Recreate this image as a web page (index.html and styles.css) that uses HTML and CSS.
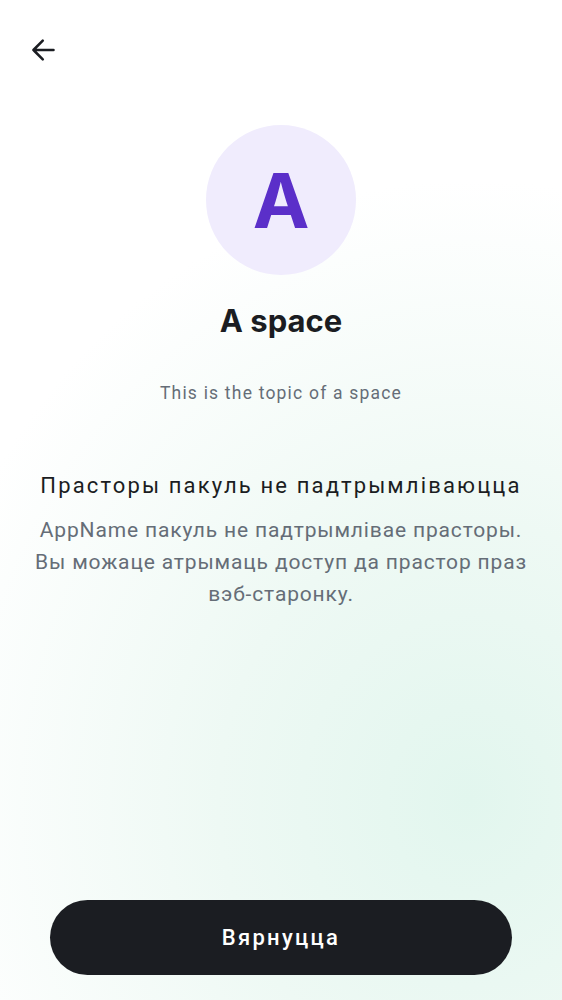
FILE: index.html
```html
<!DOCTYPE html>
<html lang="be">
<head>
<meta charset="utf-8">
<link rel="stylesheet" href="styles.css">
</head>
<body>
<div class="screen">
  <header class="topbar">
    <button class="back" aria-label="Back">
      <svg width="28" height="28" viewBox="0 0 24 24" fill="none" stroke="#1b1d22" stroke-width="2.2" stroke-linecap="round" stroke-linejoin="round"><path d="M21 12H3.8M11.8 4L3.8 12l8 8"/></svg>
    </button>
  </header>
  <main class="content">
    <div class="avatar">A</div>
    <h1 class="title">A space</h1>
    <p class="topic">This is the topic of a space</p>
    <h2 class="heading">Прасторы пакуль не падтрымліваюцца</h2>
    <p class="body">AppName пакуль не падтрымлівае прасторы. Вы можаце атрымаць доступ да прастор праз <span class="nowrap">вэб-старонку.</span></p>
  </main>
  <footer class="footer">
    <button class="primary">Вярнуцца</button>
  </footer>
</div>
</body>
</html>
```
FILE: styles.css
```css
html, body { margin: 0; padding: 0; }
body {
  width: 562px;
  height: 1000px;
  font-family: Roboto, "Noto Sans", sans-serif;
  color: #1b1d22;
  background: radial-gradient(ellipse 560px 620px at 470px 800px, #e2f6ee 0%, #eef9f4 45%, #ffffff 100%);
  overflow: hidden;
}
.screen {
  height: 1000px;
  display: flex;
  flex-direction: column;
}
.topbar {
  height: 100px;
  padding: 0 0 0 29px;
  display: flex;
  align-items: flex-start;
}
.back {
  margin-top: 36px;
  width: 28px; height: 28px;
  padding: 0; border: 0; background: none;
  display: flex;
}
.content {
  flex: 1;
  display: flex;
  flex-direction: column;
  align-items: center;
  text-align: center;
  padding: 0 16px;
}
.avatar {
  margin-top: 25px;
  width: 150px; height: 150px;
  border-radius: 50%;
  background: #f0ecfd;
  color: #5b2fc9;
  font-family: Inter, sans-serif;
  font-weight: 700;
  font-size: 76px;
  line-height: 150px;
}
.title {
  margin: 26px 0 0;
  font-family: Inter, sans-serif;
  font-weight: 700;
  font-size: 31px;
  line-height: 40px;
  color: #1b1d22;
}
.topic {
  margin: 40px 0 0;
  font-size: 17.5px;
  line-height: 24px;
  letter-spacing: 1.2px;
  color: #656d77;
}
.heading {
  margin: 66px 0 0;
  font-size: 22px;
  font-weight: 400;
  line-height: 30px;
  letter-spacing: 2.15px;
  color: #1b1d22;
}
.body {
  margin: 13px 0 0;
  max-width: 500px;
  font-size: 21px;
  line-height: 32px;
  letter-spacing: 0.85px;
  color: #656d77;
}
.nowrap { white-space: nowrap; }
.footer {
  padding: 0 50px 25px;
}
.primary {
  width: 100%;
  height: 75px;
  border: 0;
  border-radius: 38px;
  background: #1b1d22;
  color: #fff;
  font-family: Roboto, sans-serif;
  font-weight: 500;
  font-size: 22px;
  letter-spacing: 2.3px;
}
```
